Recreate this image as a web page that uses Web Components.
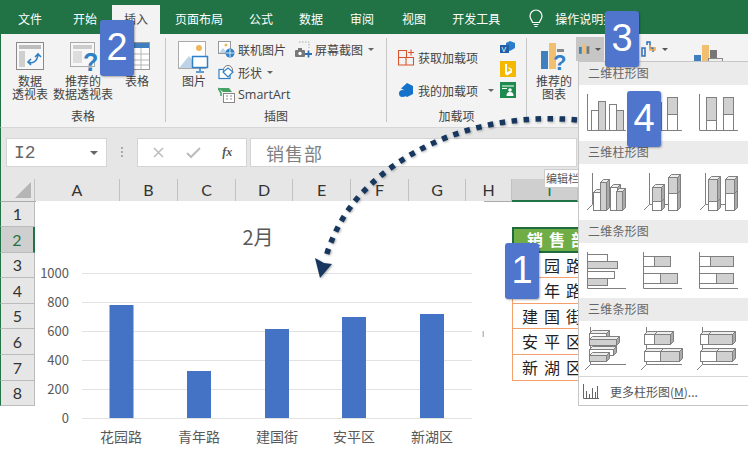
<!doctype html>
<html lang="zh"><head><meta charset="utf-8"><title>Excel</title>
<style>html,body{margin:0;padding:0;background:#fff}body{width:748px;height:451px;overflow:hidden;font-family:"Noto Sans CJK SC","Noto Sans",sans-serif}</style>
</head><body>
<x-app>
  <x-tabs slot="tabs">
    <x-tab style="margin-left:5px">文件</x-tab><x-tab style="margin-left:5px">开始</x-tab><x-tab active style="margin-left:2px">插入</x-tab><x-tab style="margin-left:2px">页面布局</x-tab><x-tab>公式</x-tab><x-tab>数据</x-tab><x-tab style="margin-left:1px">审阅</x-tab><x-tab style="margin-left:2px">视图</x-tab><x-tab>开发工具</x-tab>
    <svg width="18" height="20" viewBox="0 0 18 20" style="margin:0 0 5px 14px;flex:none"><path d="M5.500 13.500C5 11 3 10 3 7a6 6 0 0 1 12 0c0 3-2 4-2.500 6.500z" fill="none" stroke="#fff" stroke-width="1.200"/><path d="M6.500 15.500h5M7.500 17.500h3" stroke="#fff" stroke-width="1.200"/></svg>
    <x-tab style="margin-left:-3px">操作说明搜索</x-tab>
  </x-tabs>
  <x-ribbon slot="ribbon">
    <x-group label="表格" style="width:165px">
      <x-big style="width:52px;margin-left:3px"><svg slot="icon" width="30" height="30" viewBox="0 0 30 30"><rect x="1.500" y="1.500" width="27" height="27" fill="#f7f7f7" stroke="#8a8a8a"/><rect x="4" y="4" width="22" height="4" fill="#bdbdbd"/><rect x="4" y="10" width="6" height="16" fill="#cfcfcf"/><path d="M13 21c4 2 9 0 10-7M20 16l3-3 3 3M16 18l-3 3 3 3" fill="none" stroke="#2f80c6" stroke-width="1.600"/></svg>数据<br>透视表</x-big>
      <x-big style="width:60px;margin-left:-3px"><svg slot="icon" width="30" height="33" viewBox="0 0 30 33"><rect x="2.500" y="1.500" width="24" height="24" fill="#f7f7f7" stroke="#aaa"/><rect x="5" y="4" width="19" height="4" fill="#ccc"/><rect x="5" y="10" width="9" height="12" fill="#ddd"/><text x="15" y="30" font-family="Liberation Sans" font-weight="700" font-size="25" fill="#2f80c6">?</text></svg>推荐的<br>数据透视表</x-big>
      <x-big style="width:48px"><svg slot="icon" width="26" height="30" viewBox="0 0 26 30"><rect x=".5" y="1.500" width="25" height="27" fill="#fff" stroke="#9a9a9a"/><rect x="1" y="2" width="24" height="5" fill="#3f7fbf"/><path d="M1 13h24M1 19h24M1 24h24M9 7v21M17 7v21" stroke="#b5b5b5"/></svg>表格</x-big>
    </x-group>
    <x-group label="插图" style="width:221px">
      <x-big style="width:56px"><svg slot="icon" width="32" height="32" viewBox="0 0 32 32"><rect x=".5" y=".5" width="27" height="27" fill="#fff" stroke="#aaa"/><circle cx="21" cy="7" r="3" fill="#eeb55b"/><path d="M1 27l10-12 10 12z" fill="#bcd3e8"/><rect x="14.500" y="15.500" width="15" height="11" fill="#fff" stroke="#2f80c6" stroke-width="1.500"/><path d="M22 27v3M18 31h8" stroke="#2f80c6" stroke-width="1.500"/></svg>图片</x-big>
      <x-col style="width:77px;margin-left:-4px">
        <x-small><svg slot="icon" width="17" height="17" viewBox="0 0 17 17"><rect x=".5" y=".5" width="12" height="12" fill="#fff" stroke="#999"/><circle cx="8" cy="4" r="1.500" fill="#eeb55b"/><path d="M1 12l4-5 4 5z" fill="#bcd3e8"/><circle cx="12" cy="12" r="4.500" fill="#2f80c6"/><path d="M8 12h8M12 8v8" stroke="#fff" stroke-width=".8"/></svg>联机图片</x-small>
        <x-small arrow><svg slot="icon" width="17" height="17" viewBox="0 0 17 17"><rect x="1" y="5.500" width="11" height="9" fill="#fff" stroke="#2f80c6" stroke-width="1.200"/><circle cx="10" cy="6" r="4.500" fill="#fff" stroke="#777"/><path d="M5 8l5 5 5-5-5-4z" fill="#fff" stroke="#2f80c6" stroke-width="1.200"/></svg>形状</x-small>
        <x-small latin><svg slot="icon" width="17" height="17" viewBox="0 0 17 17"><path d="M0 2h11l3 4H5z" fill="#45a164"/><path d="M0 2l3 5v3" fill="none" stroke="#45a164" stroke-width="1.500"/><rect x="5.500" y="7.500" width="11" height="9" fill="#fff" stroke="#888"/><path d="M8 10h2M8 13h2M12 10h2M12 13h2" stroke="#888"/></svg>SmartArt</x-small>
      </x-col>
      <x-col>
        <x-small arrow><svg slot="icon" width="17" height="17" viewBox="0 0 17 17"><path d="M4 1h10v6" fill="none" stroke="#aaa" stroke-dasharray="1.500 1.500"/><rect x="0" y="9" width="10" height="7" rx="1" fill="#777"/><rect x="3" y="7" width="4" height="2" fill="#777"/><circle cx="5" cy="12.500" r="1.700" fill="#fff"/><path d="M13.500 9.500v7M10 13h7" stroke="#2f6fb5" stroke-width="1.800"/></svg>屏幕截图</x-small>
      </x-col>
    </x-group>
    <x-group label="加载项" style="width:140px">
      <x-col style="width:101px;margin-left:11px;padding-top:8px;gap:10px">
        <x-small><svg slot="icon" width="17" height="17" viewBox="0 0 17 17" style="margin-top:-1px"><path d="M.5 1.500h8v7h-8zM.5 8.500h7.500v7.500H.5zM8 8.500h7.500v7.500H8z" fill="none" stroke="#d8552b" stroke-width="1.100"/><path d="M13 .5v6M10 3.500h6" stroke="#d8552b" stroke-width="1.100"/></svg>获取加载项</x-small>
        <x-small arrow wide><svg slot="icon" width="17" height="17" viewBox="0 0 17 17"><path d="M9 1l6 3v8l-6 3-3-1.500V8l-3-1.500z" fill="#1473c8"/><circle cx="4.500" cy="11.500" r="3.500" fill="#1473c8"/></svg>我的加载项</x-small>
      </x-col>
      <x-col style="gap:4px;margin-left:1px;padding-top:3px">
        <svg width="16" height="16" viewBox="0 0 16 16"><path d="M10 0l5 2v5l-5 3-4-2V2z" fill="#2e7cc9"/><rect x="0" y="4" width="9" height="8" fill="#1f5ea8"/><text x="1.500" y="10.500" font-size="7" font-family="Liberation Sans" fill="#fff">V</text></svg>
        <svg width="16" height="17" viewBox="0 0 16 17"><rect width="16" height="16" fill="#f5b800"/><path d="M5 2.500l2 .8v8l4-2.300-2-1-.8-2L12 8v3.500L7 14.500 5 13z" fill="#fff"/></svg>
        <svg width="16" height="17" viewBox="0 0 16 17"><rect width="16" height="16" fill="#1e8a4f"/><path d="M2 4h12M2 6.500h5" stroke="#fff"/><circle cx="10" cy="8" r="1.800" fill="#fff"/><path d="M6.500 14c0-3 1-4 3.500-4s3.500 1 3.500 4z" fill="#fff"/></svg>
      </x-col>
    </x-group>
    <x-group label="" style="flex:1;border:0">
      <x-big style="width:54px"><svg slot="icon" width="30" height="30" viewBox="0 0 30 30"><rect x="2" y="10" width="7" height="18" fill="#3f7fbf"/><rect x="10" y="2" width="7" height="26" fill="#f0c070"/><rect x="18" y="8" width="7" height="3" fill="#888"/><text x="14" y="29" font-family="Liberation Sans" font-weight="700" font-size="22" fill="#2f80c6">?</text></svg>推荐的<br>图表</x-big>
      <x-chart-btns></x-chart-btns>
    </x-group>
  </x-ribbon>
  <x-formula slot="formula"></x-formula>
  <x-sheet slot="sheet">
    <x-head corner></x-head><x-head>A</x-head><x-head>B</x-head><x-head>C</x-head><x-head>D</x-head><x-head>E</x-head><x-head>F</x-head><x-head>G</x-head><x-head>H</x-head><x-head sel style="padding-left:10px">I</x-head>
    <x-head row style="grid-area:2/1">1</x-head><x-head row sel style="grid-area:3/1">2</x-head><x-head row style="grid-area:4/1">3</x-head><x-head row style="grid-area:5/1">4</x-head><x-head row style="grid-area:6/1">5</x-head><x-head row style="grid-area:7/1">6</x-head><x-head row style="grid-area:8/1">7</x-head><x-head row style="grid-area:9/1">8</x-head>
    <x-cell top style="grid-area:3/10">销售部</x-cell>
    <x-cell style="grid-area:4/10">花园路</x-cell><x-cell style="grid-area:5/10">青年路</x-cell><x-cell style="grid-area:6/10">建国街</x-cell><x-cell style="grid-area:7/10">安平区</x-cell><x-cell style="grid-area:8/10">新湖区</x-cell>
  </x-sheet>
  <x-chart slot="over"></x-chart>
  <x-arrow slot="over"></x-arrow>
  <x-tip slot="over">编辑栏</x-tip>
  <x-panel slot="over"></x-panel>
  <x-badge slot="over" style="left:505px;top:243px">1</x-badge>
  <x-badge slot="over" style="left:100px;top:20px">2</x-badge>
  <x-badge slot="over" style="left:605px;top:11px">3</x-badge>
  <x-badge slot="over" style="left:627px;top:91px">4</x-badge>
</x-app>
<script>
function def(name,css,html){customElements.define(name,class extends HTMLElement{constructor(){super();this.attachShadow({mode:'open'}).innerHTML='<style>'+css+'</style>'+(typeof html==='function'?html(this):html)}})}
const CJK='"Noto Sans CJK SC","Noto Sans",sans-serif';
def('x-app',`:host{display:block;position:relative;width:748px;height:451px;overflow:hidden;background:#fff;font-family:${CJK}}`,'<slot name="tabs"></slot><slot name="ribbon"></slot><slot name="formula"></slot><slot name="sheet"></slot><slot name="over"></slot>');
def('x-tabs',`:host{display:flex;align-items:flex-end;height:34px;background:#217346;box-sizing:border-box;padding-top:5px}`,'<slot></slot>');
def('x-tab',`:host{display:block;flex:none;height:29px;line-height:27px;padding:0 13px;font-size:12px;color:#fff;white-space:nowrap;box-sizing:border-box}:host([active]){background:#f3f3f3;color:#444;padding:0 12px}`,'<slot></slot>');
def('x-ribbon',`:host{display:flex;height:94px;box-sizing:border-box;background:#f3f3f3;border-left:1px solid #217346;border-bottom:1px solid #d6d6d6}`,'<slot></slot>');
def('x-group',`:host{display:block;position:relative;flex:none;box-sizing:border-box;height:84px;margin-top:4px;border-right:1px solid #c6c6c6;color:#444;font-size:12px}
.b{display:flex;height:68px}.l{position:absolute;left:0;right:0;top:70px;text-align:center;line-height:16px}`,e=>`<div class="b"><slot></slot></div><div class="l">${e.getAttribute('label')}</div>`);
def('x-big',`:host{display:block;flex:none;text-align:center;font-size:12px;line-height:13px;color:#444;white-space:nowrap}.i{height:33px;display:flex;justify-content:center;align-items:flex-start;padding-top:3px}`,'<div class="i"><slot name="icon"></slot></div><slot></slot>');
def('x-col',`:host{display:flex;flex-direction:column;flex:none}`,'<slot></slot>');
def('x-small',`:host{display:flex;align-items:center;height:23px;gap:3px;font-size:12px;color:#444;white-space:nowrap}:host([latin]){font-family:"Open Sans",sans-serif;font-size:12.500px}
.a{display:none;margin-left:2px;width:0;height:0;border:3px solid transparent;border-top:3px solid #666;border-bottom:0}:host([arrow]) .a{display:block}:host([wide]) .a{margin-left:7px}`,'<slot name="icon"></slot><span><slot></slot></span><i class="a"></i>');
const arr='<i style="display:block;width:0;height:0;border:3.500px solid transparent;border-top:3.500px solid #555;border-bottom:0;margin-left:5px"></i>';
def('x-chart-btns',`:host{display:flex;align-items:flex-start;margin-left:-5px;margin-top:-1px}div{display:flex;align-items:center;height:24px;padding:0 3px}.s{background:#c6c6c6;width:22px}`,
`<div class="s"><svg width="16" height="14" viewBox="0 0 16 14"><rect x="0" y="4" width="4" height="10" fill="#3f7fbf"/><rect x="5" y="0" width="4" height="14" fill="#f0c070"/><rect x="11" y="3" width="4" height="11" fill="#777"/></svg>${arr}</div>
<div style="margin-left:34px;padding-left:3px"><svg width="16" height="16" viewBox="0 0 16 16"><path d="M1 15V7h3v8zM6 4V1h3v6h3v4" fill="none" stroke="#2f6fb5" stroke-width="1.500"/><path d="M9 4v5h5v-3" fill="none" stroke="#e9a84f" stroke-width="1.500"/></svg>${arr}</div>
<div style="margin-left:20px;padding-top:6px"><svg width="30" height="20" viewBox="0 0 30 20"><rect x="0" y="10" width="7" height="8" fill="#3f7fbf"/><rect x="8" y="0" width="7" height="18" fill="#f0c070"/><rect x="16" y="5" width="7" height="9" fill="#777"/><rect x="14.500" y="13.500" width="14" height="6" fill="#eee" stroke="#888"/></svg></div>`);
def('x-formula',`:host{display:flex;box-sizing:border-box;height:51px;padding:10px 0 0 6px;background:#e6e6e6;border-left:1px solid #217346;color:#808080}
.n,.f,.t{height:29px;box-sizing:border-box;background:#fff;border:1px solid #d4d4d4;display:flex;align-items:center}
.n{width:101px;padding:0 7px;font:18px "Liberation Mono",monospace;color:#666;justify-content:space-between;margin-left:-1px}.n i{width:0;height:0;border:4px solid transparent;border-top:4px solid #666;border-bottom:0;margin-right:1px}
.d{width:30px;display:flex;align-items:center;justify-content:center;height:29px}
.f{width:110px;justify-content:space-around;padding:0 3px}.t{width:327px;margin-left:3px;padding-left:15px;font-size:18px;letter-spacing:1px;color:#808080}`,
`<div class="n"><span>I2</span><i></i></div><div class="d"><svg width="3" height="11" viewBox="0 0 3 11"><path d="M0 0h2v2H0zM0 4h2v2H0zM0 8h2v2H0z" fill="#aaa"/></svg></div><div class="f"><svg width="13" height="13" viewBox="0 0 13 13"><path d="M2 2l9 9M11 2l-9 9" stroke="#bcbcbc" stroke-width="1.500"/></svg><svg width="15" height="13" viewBox="0 0 15 13"><path d="M1 7l4 4 9-9" fill="none" stroke="#bcbcbc" stroke-width="2"/></svg><span style="font:italic 700 12px 'Liberation Serif',serif;color:#555">fx</span></div><div class="t">销售部</div>`);
def('x-sheet',`:host{display:grid;grid-template-columns:35px 85px 58px 58px 57px 58px 58px 57px 46px 66px;grid-template-rows:23px 25px 26px 25px 26px 25px 26px 26px 25px;height:227px;background:#fff}`,'<slot></slot>');
def('x-head',`:host{display:flex;align-items:center;justify-content:center;box-sizing:border-box;background:#e6e6e6;border-right:1px solid #c2c2c2;border-bottom:1px solid #aaa;font:16px Lato,sans-serif;color:#333;line-height:1;position:relative}
:host([row]){border-left:1px solid #217346;border-bottom:1px solid #bbb;border-right:1px solid #bbb}
:host([sel]){background:#cfcfcf;color:#217346}:host([sel]:not([row])){border-bottom:2px solid #217346}:host([sel][row]){border-right:2px solid #217346}
:host([corner]){border-left:1px solid #217346}svg{position:absolute;right:3px;bottom:3px}`,e=>e.hasAttribute('corner')?'<svg width="16" height="16"><path d="M16 0v16H0z" fill="#b5b5b5"/></svg>':'<slot></slot>');
def('x-cell',`:host{display:block;box-sizing:border-box;border:solid #f4a06a;border-width:0 0 1.500px 1.500px;padding-left:9px;font-size:16px;line-height:24px;letter-spacing:6px;color:#222;white-space:nowrap;min-width:0}
:host([top]){background:#70ad47;color:#fff;font-weight:700;border:2px solid #1e6b3c;border-right:0;padding-left:13px;line-height:21px}`,'<slot></slot>');
(function(){
 const ys=[['1000',273],['800',302],['600',331],['400',360],['200',389],['0',418]];
 const bars=[[109.5,305],[187,371],[265,329],[342,317],[420,314]];
 const cats=[['花园路',121],['青年路',199],['建国街',277],['安平区',354],['新湖区',432]];
 let s='<rect x="36" y="201" width="448" height="250" fill="#fff"/>';
 s+='<text x="258" y="245" text-anchor="middle" font-size="20" fill="#595959">2月</text>';
 ys.forEach(([t,y])=>{s+=`<path d="M82 ${y}.5H472" stroke="#e2e2e2" stroke-width="1.200"/><text x="69" y="${y+5}" text-anchor="end" font-size="13" fill="#595959">${t}</text>`});
 bars.forEach(([x,y])=>{s+=`<rect x="${x}" y="${y}" width="24" height="${418-y}" fill="#4472c4"/>`});
 cats.forEach(([t,x])=>{s+=`<text x="${x}" y="442" text-anchor="middle" font-size="14" fill="#595959">${t}</text>`});
 s+='<rect x="482.500" y="331" width="1.500" height="6" fill="#bbb"/>';
 def('x-chart',`:host{position:absolute;left:36px;top:201px;width:448px;height:250px}svg{display:block;font-family:${CJK}}`,`<svg width="448" height="250" viewBox="36 201 448 250">${s}</svg>`);
})();
def('x-arrow',`:host{position:absolute;left:0;top:0;width:748px;height:451px;pointer-events:none}svg{filter:drop-shadow(1px 1px 1px rgba(0,0,0,.3))}`,
`<svg width="748" height="451"><path d="M577 120C500 113 420 135 365 190C345 210 332 235 325 260" fill="none" stroke="#17375e" stroke-width="5.500" stroke-dasharray="5.500 6.500"/><path d="M320 278L315 258L324 263L332 264z" fill="#17375e"/></svg>`);
def('x-tip',`:host{position:absolute;left:544px;top:169px;width:34px;height:19px;overflow:hidden;background:#fff;border:1px solid #ccc;box-sizing:border-box;border-right:0;font-size:11px;line-height:17px;padding-left:1px;color:#555;white-space:nowrap}`,'<slot></slot>');
def('x-badge',`:host{position:absolute;width:34px;height:56px;box-sizing:border-box;background:#4f75cd;border-radius:3px;color:#fff;font:38px/55px "Liberation Sans",sans-serif;text-align:center;box-shadow:1px 1px 2px rgba(0,0,0,.3)}`,'<slot></slot>');
(function(){
 const S='#7f7f7f',G='#d0d0d0',W='#fff';
 const r=(x,y,w,h,f)=>`<rect x="${x+.5}" y="${y+.5}" width="${w}" height="${h}" fill="${f}" stroke="${S}" stroke-width="1"/>`;
 const c3=(x,y,w,h,f,d=3)=>`<path d="M${x+.5} ${y+.5}l${d} ${-d}h${w}l${-d} ${d}z" fill="#eee" stroke="${S}"/><path d="M${x+w+.5} ${y+.5}l${d} ${-d}v${h}l${-d} ${d}z" fill="#aaa" stroke="${S}"/>`+r(x,y,w,h,f);
 const ax=(x,b,t=9,e=41)=>`<path d="M${x}.5 ${t}V${b}.5H${e}" fill="none" stroke="${S}"/>`;
 const ax3=(x,b,t=9,e=40)=>`<path d="M${x}.5 ${t}V${b}.5H${e}M${x}.5 ${b}.5L${x-5} ${b+6}" fill="none" stroke="${S}"/>`;
 const I=c=>`<svg width="56" height="55" viewBox="0 0 56 55" style="flex:none;display:block">${c}</svg>`;
 const col2=[ax(2,45)+r(6,25,7,20,W)+r(13,16,7,29,G)+r(24,19,7,26,W)+r(31,25,7,20,G),
  ax(2,45)+r(10,31,10,14,W)+r(10,17,10,14,G)+r(26,29,10,16,W)+r(26,12,10,17,G),
  ax(2,45)+r(9,35,10,10,W)+r(9,12,10,23,G)+r(26,29,10,16,W)+r(26,12,10,17,G)];
 const col3=[ax3(7,40)+c3(8,28,7,18,W)+c3(15,18,6,28,G)+c3(25,23,7,23,W)+c3(31,27,6,19,G),
  ax3(8,40)+c3(11,37,9,9,W)+c3(11,23,9,14,G)+c3(27,29,9,17,W)+c3(27,13,9,16,G),
  ax3(8,40)+c3(11,37,9,9,W)+c3(11,15,9,22,G)+c3(28,29,9,17,W)+c3(28,15,9,14,G)];
 const bar2=[ax(2,45,9,41)+r(2,11,20,7,W)+r(2,18,30,7,G)+r(2,28,27,7,W)+r(2,35,20,7,G),
  ax(2,45)+r(2,13,11,10,W)+r(13,13,16,10,G)+r(2,30,17,10,W)+r(19,30,17,10,G),
  ax(2,45)+r(2,13,11,10,W)+r(13,13,23,10,G)+r(2,30,17,10,W)+r(19,30,17,10,G)];
 const bar3=[ax3(5,43,6,41)+c3(4,12,17,6,W)+c3(4,18,27,6,G)+c3(4,28,24,6,W)+c3(4,34,17,6,G),
  ax3(5,43,6,41)+c3(3,13,10,10,W)+c3(13,13,16,10,G)+c3(3,30,16,10,W)+c3(19,30,19,10,G),
  ax3(5,43,6,41)+c3(3,13,8,10,W)+c3(11,13,24,10,G)+c3(3,30,16,10,W)+c3(19,30,16,10,G)];
 const sec=(t,a,h=56)=>`<h4>${t}</h4><div class="g" style="height:${h}px">${a.map(I).join('')}</div>`;
 def('x-panel',`:host{position:absolute;left:578px;top:61px;width:170px;height:345px;box-sizing:border-box;background:#fff;border:solid #c6c6c6;border-width:1px 0 1px 1px;display:flex;flex-direction:column;font-family:${CJK}}
 h4{margin:0;height:23px;line-height:22px;background:#ebebeb;color:#666;font-size:12px;font-weight:400;padding-left:9px;letter-spacing:.2px;flex:none}
 .g{display:flex;padding-left:6px;flex:none}
 .m{flex:1;border-top:1px solid #d6d6d6;display:flex;align-items:center;gap:11px;padding-left:4px;font-size:12px;color:#555}`,
 sec('二维柱形图',col2)+sec('三维柱形图',col3)+sec('二维条形图',bar2,55)+sec('三维条形图',bar3,55)+
 `<div class="m"><svg width="16" height="15" viewBox="0 0 16 15"><path d="M.5 0v14.500H16M3.500 14V7M6.500 14V10M9.500 14V4M12.500 14V8M14.500 14V2" fill="none" stroke="#666"/></svg><span>更多柱形图(<u>M</u>)...</span></div>`);
})();
</script>
</body></html>
